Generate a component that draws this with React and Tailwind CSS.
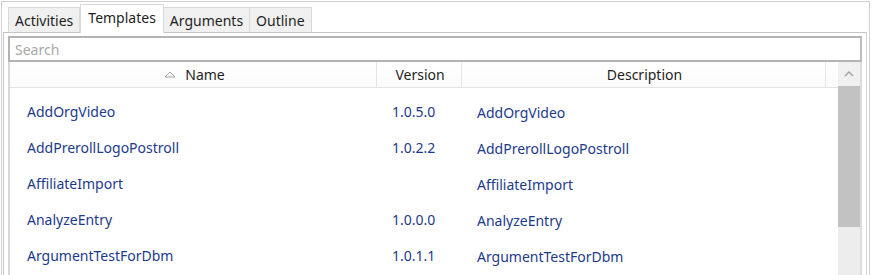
import React from 'react';

const rows = [
  { name: 'AddOrgVideo', version: '1.0.5.0', description: 'AddOrgVideo' },
  { name: 'AddPrerollLogoPostroll', version: '1.0.2.2', description: 'AddPrerollLogoPostroll' },
  { name: 'AffiliateImport', version: '', description: 'AffiliateImport' },
  { name: 'AnalyzeEntry', version: '1.0.0.0', description: 'AnalyzeEntry' },
  { name: 'ArgumentTestForDbm', version: '1.0.1.1', description: 'ArgumentTestForDbm' },
];

const tabs = ['Activities', 'Templates', 'Arguments', 'Outline'];

const Tab = ({ label, active }) => (
  <div
    className={
      active
        ? 'px-[7px] h-[29px] -mb-px flex items-center bg-white border border-b-0 border-[#d9d9d9] relative z-10'
        : 'px-[6px] h-[25px] flex items-center bg-[#f0f0f0] border border-b-0 border-[#d9d9d9] -ml-px first:ml-0'
    }
  >
    <span className={active ? '-mt-[3px]' : ''}>{label}</span>
  </div>
);

export default function App() {
  return (
    <div
      className="w-[874px] h-[275px] overflow-hidden bg-white text-[14px] text-[#1e1e1e]"
      style={{ fontFamily: '"Noto Sans", "Open Sans", sans-serif' }}
    >
      <div className="ml-px mt-px w-[869px] h-[290px] border border-[#cfcfcf] bg-white flex flex-col">
        {/* tab strip */}
        <div className="flex items-end pl-[6px] h-[30px]">
          {tabs.map((t) => (
            <Tab key={t} label={t} active={t === 'Templates'} />
          ))}
        </div>

        {/* tab panel */}
        <div className="mx-px mr-[2px] flex-1 border border-[#c4c4c4] border-r-[#d6d6d6] flex flex-col px-[4px] pt-[3px]">
          {/* search */}
          <div className="h-[26px] border-2 border-[#b3b3b3] border-r-[#bdbdbd] flex items-center px-[5px] text-[#a8a8a8]">
            Search
          </div>

          {/* list */}
          <div className="flex flex-1 border-l-2 border-r-2 border-l-[#d8d8d8] border-r-[#dcdcdc]">
            <div className="flex-1 flex flex-col">
              {/* header */}
              <div className="h-[26px] flex border-b border-[#e3e3e3] bg-gradient-to-b from-white to-[#fbfbfb]">
                <div className="w-[367px] flex items-center justify-center border-r border-[#e5e5e5] relative pl-[24px]">
                  <svg width="12" height="7" viewBox="0 0 12 7" className="absolute left-[154px] top-[9px]">
                    <path d="M1 6 L6 1 L11 6 Z" fill="none" stroke="#a6a6a6" strokeWidth="1" />
                  </svg>
                  Name
                </div>
                <div className="w-[85px] flex items-center justify-center border-r border-[#e5e5e5] pl-[2px]">
                  Version
                </div>
                <div className="w-[364px] flex items-center justify-center border-r border-[#e5e5e5] pl-[2px]">
                  Description
                </div>
                <div className="flex-1" />
              </div>

              {/* rows */}
              <div className="flex flex-col pt-[5px] text-[#1c3a8c]">
                {rows.map((r) => (
                  <div key={r.name} className="h-[36px] flex items-center">
                    <div className="w-[367px] pl-[17px]">{r.name}</div>
                    <div className="w-[85px] pl-[15px]">{r.version}</div>
                    <div className="flex-1 pl-[15px] pt-[3px]">{r.description}</div>
                  </div>
                ))}
              </div>
            </div>

            {/* scrollbar */}
            <div className="w-[22px] flex flex-col bg-[#ededed]">
              <div className="h-[24px] flex items-center justify-center bg-[#f0f0f0]">
                <svg width="10" height="6" viewBox="0 0 10 6">
                  <path d="M1 5 L5 1 L9 5" fill="none" stroke="#a0a0a0" strokeWidth="1.3" />
                </svg>
              </div>
              <div className="h-[141px] bg-[#c2c2c2]" />
              <div className="flex-1" />
            </div>
          </div>
        </div>
      </div>
    </div>
  );
}
